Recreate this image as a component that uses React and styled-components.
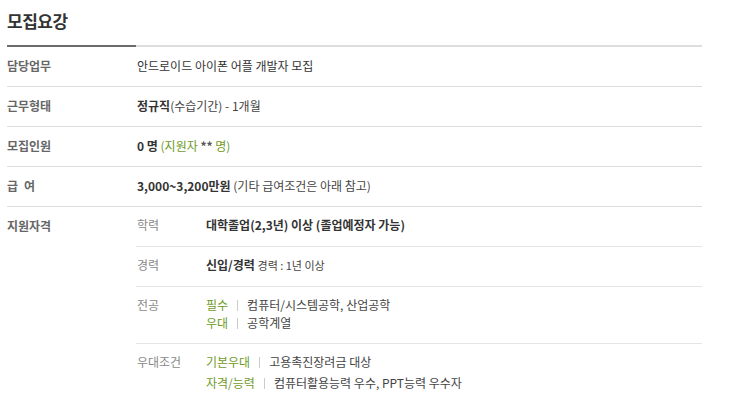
import React from 'react'
import styled, { createGlobalStyle } from 'styled-components';

const GlobalStyle = createGlobalStyle`
  body {
    margin: 0;
    background: #fff;
    font-family: "Noto Sans CJK KR", "Noto Sans", sans-serif;
    font-size: 12px;
    color: #333;
  }
`;

const Wrapper = styled.div`
  width: 695px;
  padding-left: 7px;
`;

const Heading = styled.div`
  position: relative;
  box-sizing: border-box;
  height: 47px;
  border-bottom: 2px solid #ddd;
  display: flex;
  align-items: center;
  font-size: 17px;
  font-weight: 700;
  color: #333;
  letter-spacing: -0.5px;
  padding-bottom: 4px;

  &::after {
    content: '';
    position: absolute;
    left: 0;
    bottom: -2px;
    width: 129px;
    height: 2px;
    background: #6c6c6c;
  }
`;

const Row = styled.div`
  display: grid;
  grid-template-columns: 129px 1fr;
  border-bottom: ${({ $last }) => ($last ? 'none' : '1px solid #ddd')};
  min-height: 39px;
`;

const Label = styled.div`
  padding-top: 10px;
  color: #666;
  font-weight: 700;
  line-height: 18px;
  letter-spacing: ${({ $wide }) => ($wide ? '6px' : '0')};
`;

const Value = styled.div`
  padding: 10px 0 0 1px;
  line-height: 18px;
  color: #333;
`;

const Strong = styled.b`
  font-weight: 700;
  color: #333;
`;

const Note = styled.span`
  color: #444;
  font-size: ${({ $size }) => $size || '12px'};
`;

const Green = styled.span`
  color: #6f9a28;
`;

const Stars = styled.b`
  color: #555;
`;

const SubList = styled.div`
  display: flex;
  flex-direction: column;
`;

const SubRow = styled.div`
  display: grid;
  grid-template-columns: 69px 1fr;
  border-bottom: ${({ $last }) => ($last ? 'none' : '1px solid #e5e5e5')};
  padding: 7px 0 ${({ $pb }) => $pb || '12px'} 1px;
`;

const SubLabel = styled.div`
  color: #888;
  line-height: 18px;
  padding-top: 2px;
`;

const SubValue = styled.div`
  display: flex;
  flex-direction: column;
  gap: ${({ $gap }) => $gap || '0px'};
  line-height: 18px;
  padding-top: 2px;
`;

const TagLine = styled.div`
  display: flex;
  align-items: center;
`;

const Tag = styled.span`
  color: #6f9a28;
`;

const Bar = styled.span`
  width: 1px;
  height: 11px;
  background: #ccc;
  margin: 0 9px;
`;

const Text = styled.span`
  color: #444;
`;

const App = () => {
  return (
    <>
      <GlobalStyle />
      <Wrapper>
        <Heading>모집요강</Heading>
        <Row>
          <Label>담당업무</Label>
          <Value>안드로이드 아이폰 어플 개발자 모집</Value>
        </Row>
        <Row>
          <Label>근무형태</Label>
          <Value><Strong>정규직</Strong><Note>(수습기간) - 1개월</Note></Value>
        </Row>
        <Row>
          <Label>모집인원</Label>
          <Value><Strong>0 명</Strong> <Green>(지원자 <Stars>**</Stars> 명)</Green></Value>
        </Row>
        <Row>
          <Label $wide>급여</Label>
          <Value><Strong>3,000~3,200만원</Strong> <Note>(기타 급여조건은 아래 참고)</Note></Value>
        </Row>
        <Row $last>
          <Label>지원자격</Label>
          <SubList>
            <SubRow>
              <SubLabel>학력</SubLabel>
              <SubValue><Strong>대학졸업(2,3년) 이상 (졸업예정자 가능)</Strong></SubValue>
            </SubRow>
            <SubRow>
              <SubLabel>경력</SubLabel>
              <SubValue><span><Strong>신입/경력</Strong> <Note $size="11px">경력 : 1년 이상</Note></span></SubValue>
            </SubRow>
            <SubRow $pb="11px">
              <SubLabel>전공</SubLabel>
              <SubValue>
                <TagLine><Tag>필수</Tag><Bar /><Text>컴퓨터/시스템공학, 산업공학</Text></TagLine>
                <TagLine><Tag>우대</Tag><Bar /><Text>공학계열</Text></TagLine>
              </SubValue>
            </SubRow>
            <SubRow $last>
              <SubLabel>우대조건</SubLabel>
              <SubValue $gap="3px">
                <TagLine><Tag>기본우대</Tag><Bar /><Text>고용촉진장려금 대상</Text></TagLine>
                <TagLine><Tag>자격/능력</Tag><Bar /><Text>컴퓨터활용능력 우수, PPT능력 우수자</Text></TagLine>
              </SubValue>
            </SubRow>
          </SubList>
        </Row>
      </Wrapper>
    </>
  )
}

export default App
